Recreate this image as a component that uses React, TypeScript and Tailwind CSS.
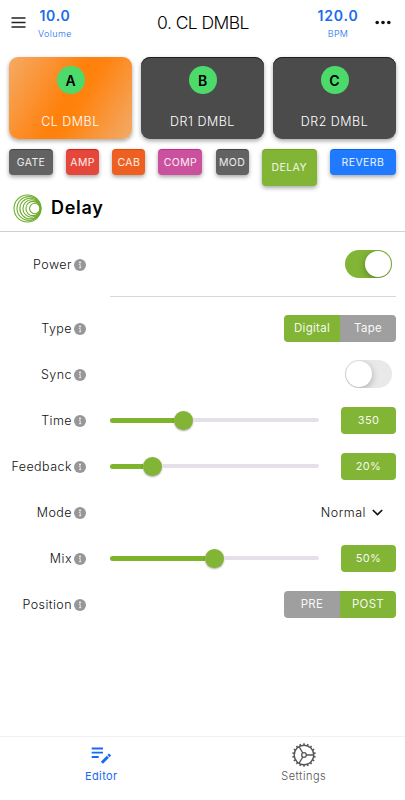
import React from "react";

const scenes = [
  { letter: "A", name: "CL DMBL", active: true },
  { letter: "B", name: "DR1 DMBL", active: false },
  { letter: "C", name: "DR2 DMBL", active: false },
];

const effects = [
  { name: "GATE", style: "w-[44px] h-[26px] bg-[#626262] border-t-[#454545]" },
  { name: "AMP", style: "w-[33px] h-[26px] bg-[#e5473b] border-t-[#d01f16]" },
  { name: "CAB", style: "w-[33px] h-[26px] bg-[#ed6022] border-t-[#df4c08]" },
  { name: "COMP", style: "w-[44px] h-[26px] bg-[#cb509e] border-t-[#bd2f89]" },
  { name: "MOD", style: "w-[33px] h-[26px] bg-[#626262] border-t-[#454545]" },
  { name: "DELAY", style: "w-[55px] h-[37px] bg-[#82b536] border-t-[#6fa51d]" },
  { name: "REVERB", style: "w-[66px] h-[26px] bg-[#1f7aff] border-t-[#0865ed]" },
];

const cogTeeth = Array.from({ length: 18 }, (_, i) => i * 20);

function InfoIcon() {
  return (
    <svg className="ml-[2px] mt-px h-3 w-3 shrink-0" viewBox="0 0 12 12">
      <circle cx="6" cy="6" r="6" fill="#979797" />
      <circle cx="6" cy="3.5" r=".9" fill="#fff" />
      <path d="M5.1 5.5h1.1v3.2M5 8.7h2.2" fill="none" stroke="#fff" strokeWidth=".75" />
    </svg>
  );
}

function EditorIcon() {
  return (
    <svg className="h-[26px] w-[26px]" viewBox="0 0 26 26" fill="none" stroke="currentColor">
      <path d="M3.7 6.5H15M3.7 10.7H15M3.7 15h7" strokeWidth="1.8" />
      <path d="m13.9 20.7 6-6" strokeWidth="3" />
      <path d="m20.5 14.1 1.6-1.6" strokeWidth="3" />
    </svg>
  );
}

function CogIcon() {
  return (
    <svg className="h-[26px] w-[26px]" viewBox="0 0 26 26" fill="none" stroke="currentColor">
      <circle cx="13" cy="13" r="9.8" strokeWidth="1.4" />
      <circle cx="13" cy="13" r="2.3" strokeWidth="1.3" />
      <path d="M15.3 13h7.5M11.8 11 8 4.6M11.8 15 8 21.4" strokeWidth="1.3" />
      {cogTeeth.map((angle) => (
        <path key={angle} d="M13 3.1V1.2" strokeWidth="1.5" transform={`rotate(${angle} 13 13)`} />
      ))}
    </svg>
  );
}

function Row({ label, children }: { label: string; children: React.ReactNode }) {
  return (
    <div className="flex h-[46px] items-center">
      <div className="flex w-[86px] shrink-0 items-center justify-end">
        <span className="pt-[2px] text-[12.5px] font-light leading-4 tracking-[0.45px] text-[#111]">{label}</span>
        <InfoIcon />
      </div>
      <div className="ml-6 mr-[9px] flex flex-1 items-center justify-end">{children}</div>
    </div>
  );
}

function Toggle({ on = false }: { on?: boolean }) {
  return (
    <div className={`mr-1 flex h-[28px] w-[47px] items-center overflow-hidden rounded-full px-px ${on ? "justify-end bg-[#82b536]" : "bg-[#e9e9e9]"}`}>
      <div className="h-[26px] w-[26px] rounded-full bg-white shadow-[0_2px_7px_rgba(0,0,0,0.28)]" />
    </div>
  );
}

function Segments({ options, selected }: { options: string[]; selected: number }) {
  return (
    <div className="flex h-[27px] w-[112px] overflow-hidden rounded">
      {options.map((option, i) => (
        <div
          key={option}
          className={`flex flex-1 items-center justify-center pt-[2px] text-[11.5px] tracking-[0.3px] text-white/95 ${i === selected ? "bg-[#82b536]" : "bg-[#9f9f9f]"}`}
        >
          {option}
        </div>
      ))}
    </div>
  );
}

function Slider({ position, value }: { position: number; value: string }) {
  return (
    <div className="flex w-full items-center justify-between">
      <div className="flex w-[209px] items-center">
        <div className="h-[5px] rounded-l-full bg-[#7eb32c]" style={{ width: position - 9 }} />
        <div className="h-[19px] w-[19px] shrink-0 rounded-full bg-[#82b536] shadow-[0_1px_2px_rgba(0,0,0,0.35)]" />
        <div className="h-[4px] flex-1 rounded-r-full bg-[#e5e0e8]" />
      </div>
      <div className="flex h-[27px] w-[55px] items-center justify-center rounded bg-[#82b536] pt-px text-[11px] tracking-[0.3px] text-white/95">
        {value}
      </div>
    </div>
  );
}

export default function App() {
  return (
    <div className="flex h-[800px] w-[405px] flex-col overflow-hidden bg-white font-['Inter','Liberation_Sans',sans-serif] text-black">
      <header className="flex h-[57px] shrink-0 items-start">
        <svg className="ml-[11px] mt-[16px] h-[13px] w-[15px] shrink-0" viewBox="0 0 15 13" stroke="#222" strokeWidth="1.3">
          <path d="M.5 2h14M.5 6.5h14M.5 11h14" />
        </svg>
        <div className="ml-[12px] mt-[8px] flex w-[34px] flex-col items-center whitespace-nowrap text-[#176bf0]">
          <span className="text-[14px] font-semibold leading-4 tracking-[0.75px]">10.0</span>
          <span className="mt-[4px] text-[9px] font-light leading-[11px] tracking-[0.4px]">Volume</span>
        </div>
        <h1 className="ml-[68px] mt-[12px] w-[126px] whitespace-nowrap text-center text-[17.5px] font-light leading-[22px] tracking-[-0.55px]">0. CL DMBL</h1>
        <div className="ml-[51px] mt-[8px] flex w-[42px] flex-col items-center whitespace-nowrap text-[#176bf0]">
          <span className="text-[14px] font-semibold leading-4 tracking-[0.85px]">120.0</span>
          <span className="mt-[4px] text-[9px] font-light leading-[11px] tracking-[0.3px]">BPM</span>
        </div>
        <svg className="ml-[16px] mt-[20px] h-[5px] w-[16px] shrink-0" viewBox="0 0 16 5" fill="#111">
          <circle cx="2.2" cy="2.5" r="1.8" /><circle cx="8" cy="2.5" r="1.8" /><circle cx="13.8" cy="2.5" r="1.8" />
        </svg>
      </header>

      <div className="mx-[9px] flex h-[82px] shrink-0 gap-[9px]">
        {scenes.map((scene) => (
          <div
            key={scene.letter}
            className={`flex flex-1 flex-col items-center rounded-[9px] text-white ${scene.active ? "bg-[linear-gradient(120deg,#f5aa65_0%,#ff800b_48%,#ff830f_58%,#f2ab6b_100%)] shadow-[0_2px_4px_rgba(0,0,0,0.35)]" : "bg-[#4b4b4b] shadow-[0_2px_4px_rgba(0,0,0,0.35),inset_0_1px_0_#202020]"}`}
          >
            <div className="mt-[9px] flex h-[28px] w-[28px] items-center justify-center rounded-full bg-[#4cda6b] text-[14px] font-semibold text-black">{scene.letter}</div>
            <span className="mt-[20px] text-[12.5px] font-light leading-4 tracking-[0.5px]">{scene.name}</span>
          </div>
        ))}
      </div>

      <div className="mx-[9px] mt-[10px] flex h-[37px] shrink-0 items-start justify-between">
        {effects.map((effect) => (
          <div
            key={effect.name}
            className={`flex shrink-0 items-center justify-center rounded border-t text-[10.5px] tracking-[0.4px] text-white/90 shadow-[0_2px_4px_rgba(0,0,0,0.35)] ${effect.style}`}
          >
            {effect.name}
          </div>
        ))}
      </div>

      <div className="flex h-[46px] shrink-0 items-center border-b border-[#d0d0d0] pl-[13px]">
        <svg className="h-[29px] w-[29px]" viewBox="0 0 29 29" fill="none" stroke="#6eac2c" strokeWidth="1.1">
          <circle cx="14.5" cy="14.5" r="13.5" />
          <circle cx="15.9" cy="14.5" r="11.9" />
          <circle cx="17.2" cy="14.5" r="10.3" />
          <circle cx="18.6" cy="14.5" r="8.7" />
          <circle cx="20" cy="14.5" r="7.1" />
          <circle cx="21.8" cy="14.5" r="5.2" />
        </svg>
        <h2 className="-mt-[2px] ml-[9px] text-[18px] font-semibold leading-6 tracking-[0.7px]">Delay</h2>
      </div>

      <main className="flex flex-1 flex-col pt-[9px]">
        <Row label="Power"><Toggle on /></Row>
        <div className="ml-[110px] mr-[9px] mt-[9px] h-px bg-[#d8d8d8]" />
        <div className="mt-[8px]">
          <Row label="Type"><Segments options={["Digital", "Tape"]} selected={0} /></Row>
          <Row label="Sync"><Toggle /></Row>
          <Row label="Time"><Slider position={73} value="350" /></Row>
          <Row label="Feedback"><Slider position={42} value="20%" /></Row>
          <Row label="Mode">
            <span className="pt-[2px] text-[12.5px] font-light leading-4 tracking-[0.5px] text-[#111]">Normal</span>
            <svg className="ml-[6px] mr-[13px] mt-px h-[7px] w-[11px]" viewBox="0 0 11 7" fill="none" stroke="#111" strokeWidth="1.7">
              <path d="m.8 1 4.7 4.6L10.2 1" />
            </svg>
          </Row>
          <Row label="Mix"><Slider position={104} value="50%" /></Row>
          <Row label="Position"><Segments options={["PRE", "POST"]} selected={1} /></Row>
        </div>
      </main>

      <nav className="flex h-[64px] shrink-0 border-t border-[#f2f2f2]">
        <div className="flex flex-1 flex-col items-center pt-[5px] text-[#176bf0]">
          <EditorIcon />
          <span className="mt-px text-[11px] leading-[14px] tracking-[0.4px]">Editor</span>
        </div>
        <div className="flex flex-1 flex-col items-center pt-[5px] text-[#555]">
          <CogIcon />
          <span className="mt-px text-[11px] font-light leading-[14px] tracking-[0.5px]">Settings</span>
        </div>
      </nav>
    </div>
  );
}
